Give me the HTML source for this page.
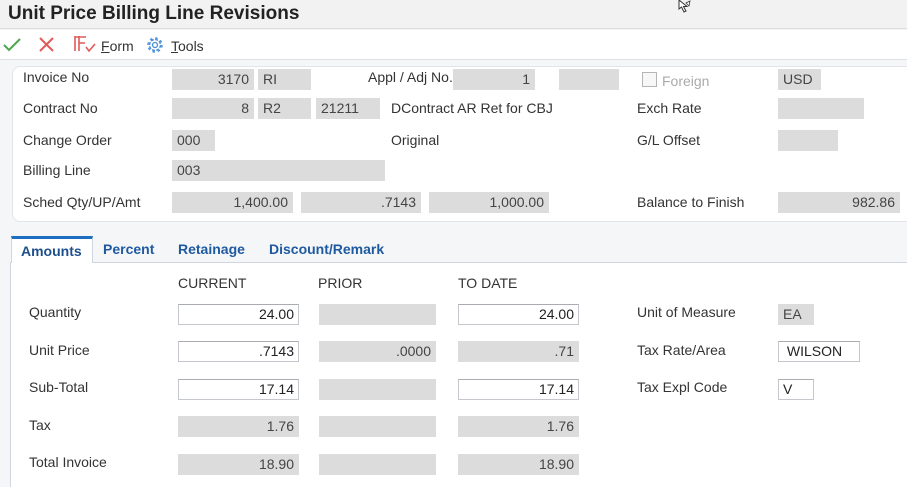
<!DOCTYPE html>
<html><head><meta charset="utf-8"><style>
*{margin:0;padding:0;box-sizing:border-box}
html,body{width:907px;height:487px;overflow:hidden}
body{background:#f5f6f8;font-family:"Liberation Sans",Arial,sans-serif;font-size:14px;color:#333;position:relative}
.a{position:absolute}
.title{left:0;top:0;width:907px;height:29px;background:#f2f2f2;border-bottom:1px solid #dcdcdc}
.title span{position:absolute;left:8px;top:3px;font-size:19px;font-weight:bold;color:#222}
.tb{left:0;top:30px;width:907px;height:30px;background:#fff;border-bottom:1px solid #dde0e4}
.panel{left:12px;top:66px;width:920px;height:156px;background:#fff;border:1px solid #e2e4e8;border-radius:8px}
.body{left:10px;top:262px;width:910px;height:225px;background:#fff;border-left:1px solid #cfd6df;border-top:1px solid #cfd6df;border-radius:0 8px 0 0}
.l{position:absolute;font-size:14px;color:#333;white-space:nowrap}
.g{position:absolute;height:21px;background:#dcdcdc;font-size:14px;line-height:21px;padding:0 5px;color:#444}
.r{text-align:right}
.i{position:absolute;height:21px;background:#fff;border:1px solid #c4c8cc;border-top-color:#a9adb2;font-size:14px;line-height:19px;padding:0 4px;color:#222}
.tab{position:absolute;top:237px;font-size:14px;font-weight:bold;color:#1f5aa0}
</style></head><body>
<div class="a title"><span>Unit Price Billing Line Revisions</span></div>
<svg class="a" style="left:677px;top:0" width="16" height="14" viewBox="0 0 16 14"><path d="M2 0 L2 9 L4.5 7 L7 12 L9 11 L6.5 6.5 L10 6.5 Z" fill="#fff" stroke="#333" stroke-width="1"/><path d="M9 3 L13 1 L12 6 Z" fill="#fff" stroke="#333" stroke-width=".8"/></svg>
<div class="a tb">
<svg class="a" style="left:3px;top:7px" width="18" height="16"><path d="M1 8 L6 13 L17 2" fill="none" stroke="#4ca64c" stroke-width="2"/></svg>
<svg class="a" style="left:38px;top:6px" width="17" height="17"><path d="M2 2 L15 15 M15 2 L2 15" fill="none" stroke="#e05a5a" stroke-width="2"/></svg>
<svg class="a" style="left:73px;top:5px" width="24" height="20"><path d="M2 1 L2 16 M2 2 L13 2 M6 1 L6 16 M6 8 L12 8 M13 12 L16 16 L22 9" fill="none" stroke="#e05a5a" stroke-width="1.6"/></svg>
<span class="l" style="left:101px;top:8px"><u>F</u>orm</span>
<svg class="a" style="left:146px;top:6px" width="18" height="18" viewBox="0 0 18 18"><circle cx="9" cy="9" r="5.5" fill="none" stroke="#4a90d9" stroke-width="1.5" stroke-dasharray="3 1.3"/><circle cx="9" cy="9" r="2.5" fill="none" stroke="#4a90d9" stroke-width="1.3"/><circle cx="9" cy="9" r="7" fill="none" stroke="#4a90d9" stroke-width="1.5" stroke-dasharray="2.5 3"/></svg>
<span class="l" style="left:171px;top:8px"><u>T</u>ools</span>
</div>
<div class="a panel"></div>
<span class="l" style="left:23px;top:69px">Invoice No</span>
<div class="g r" style="left:172px;top:69px;width:82px">3170</div>
<div class="g" style="left:258px;top:69px;width:53px">RI</div>
<span class="l" style="left:368px;top:69px">Appl / Adj No.</span>
<div class="g r" style="left:453px;top:69px;width:82px">1</div>
<div class="g" style="left:559px;top:69px;width:60px"></div>
<div class="a" style="left:642px;top:72px;width:15px;height:15px;border:1px solid #b5b5b5;background:#f7f7f7"></div>
<span class="l" style="left:662px;top:73px;color:#aaa">Foreign</span>
<div class="g" style="left:778px;top:69px;width:43px">USD</div>

<span class="l" style="left:23px;top:100px">Contract No</span>
<div class="g r" style="left:172px;top:98px;width:82px">8</div>
<div class="g" style="left:258px;top:98px;width:53px">R2</div>
<div class="g" style="left:316px;top:98px;width:64px">21211</div>
<span class="l" style="left:391px;top:100px">DContract AR Ret for CBJ</span>
<span class="l" style="left:637px;top:100px">Exch Rate</span>
<div class="g" style="left:778px;top:98px;width:86px"></div>

<span class="l" style="left:23px;top:132px">Change Order</span>
<div class="g" style="left:172px;top:130px;width:43px">000</div>
<span class="l" style="left:391px;top:132px">Original</span>
<span class="l" style="left:637px;top:132px">G/L Offset</span>
<div class="g" style="left:778px;top:130px;width:60px"></div>

<span class="l" style="left:23px;top:162px">Billing Line</span>
<div class="g" style="left:172px;top:160px;width:213px">003</div>

<span class="l" style="left:23px;top:194px">Sched Qty/UP/Amt</span>
<div class="g r" style="left:172px;top:192px;width:121px">1,400.00</div>
<div class="g r" style="left:301px;top:192px;width:120px">.7143</div>
<div class="g r" style="left:429px;top:192px;width:120px">1,000.00</div>
<span class="l" style="left:637px;top:194px">Balance to Finish</span>
<div class="g r" style="left:778px;top:192px;width:122px">982.86</div>

<div class="a body"></div>
<div class="a" style="left:11px;top:236px;width:82px;height:27px;background:#fff;border-top:3px solid #1f6fc0;border-left:1px solid #cfd6df;border-right:1px solid #cfd6df"></div>
<span class="tab" style="left:21px;top:243px;color:#1d4f8c">Amounts</span>
<span class="tab" style="left:103px;top:241px">Percent</span>
<span class="tab" style="left:178px;top:241px">Retainage</span>
<span class="tab" style="left:269px;top:241px">Discount/Remark</span>

<span class="l" style="left:178px;top:275px">CURRENT</span>
<span class="l" style="left:318px;top:275px">PRIOR</span>
<span class="l" style="left:458px;top:275px">TO DATE</span>

<span class="l" style="left:29px;top:304px">Quantity</span>
<div class="i r" style="left:178px;top:304px;width:121px">24.00</div>
<div class="g" style="left:319px;top:304px;width:117px"></div>
<div class="i r" style="left:458px;top:304px;width:121px">24.00</div>
<span class="l" style="left:637px;top:304px">Unit of Measure</span>
<div class="g" style="left:778px;top:304px;width:36px">EA</div>

<span class="l" style="left:29px;top:342px">Unit Price</span>
<div class="i r" style="left:178px;top:341px;width:121px">.7143</div>
<div class="g r" style="left:319px;top:341px;width:117px">.0000</div>
<div class="g r" style="left:458px;top:341px;width:121px">.71</div>
<span class="l" style="left:637px;top:342px">Tax Rate/Area</span>
<div class="i" style="left:778px;top:341px;width:82px">&nbsp;WILSON</div>

<span class="l" style="left:29px;top:379px">Sub-Total</span>
<div class="i r" style="left:178px;top:379px;width:121px">17.14</div>
<div class="g" style="left:319px;top:379px;width:117px"></div>
<div class="i r" style="left:458px;top:379px;width:121px">17.14</div>
<span class="l" style="left:637px;top:379px">Tax Expl Code</span>
<div class="i" style="left:778px;top:379px;width:36px">V</div>

<span class="l" style="left:29px;top:417px">Tax</span>
<div class="g r" style="left:178px;top:416px;width:121px">1.76</div>
<div class="g" style="left:319px;top:416px;width:117px"></div>
<div class="g r" style="left:458px;top:416px;width:121px">1.76</div>

<span class="l" style="left:29px;top:454px">Total Invoice</span>
<div class="g r" style="left:178px;top:454px;width:121px">18.90</div>
<div class="g" style="left:319px;top:454px;width:117px"></div>
<div class="g r" style="left:458px;top:454px;width:121px">18.90</div>
</body></html>
